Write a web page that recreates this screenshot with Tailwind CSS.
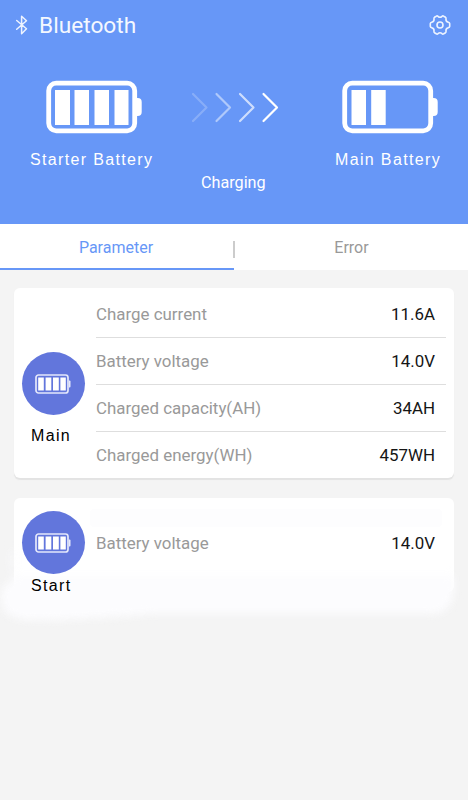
<!DOCTYPE html>
<html lang="en">
<head>
<meta charset="utf-8">
<title>Bluetooth</title>
<script src="https://cdn.jsdelivr.net/npm/@tailwindcss/browser@4"></script>
</head>
<body class="w-[468px] h-[800px] overflow-hidden bg-[#f4f4f4] font-['Roboto',sans-serif]">
<svg class="hidden">
  <symbol id="shell" viewBox="0 0 96 54">
    <rect x="2.7" y="3.2" width="86" height="47.600" rx="7.500" fill="none" stroke="#fff" stroke-width="4.800"/>
    <path d="M90.500 18h1.200a4 4 0 0 1 4 4v10a4 4 0 0 1-4 4h-1.200z" fill="#fff"/>
  </symbol>
  <symbol id="mini" viewBox="0 0 36 20">
    <rect x="1" y="1" width="32" height="18" rx="2.500" fill="none" stroke="#e4e8fb" stroke-width="1.700"/>
    <path d="M34 6.500h.500a1 1 0 0 1 1 1v5a1 1 0 0 1-1 1H34z" fill="#e4e8fb"/>
    <path d="M3.200 3.500h5.600v13H3.200zM10.600 3.500h5.700v13h-5.700zM18 3.500h5.800v13H18zM25.400 3.500h5.400v13h-5.400z" fill="#fff"/>
  </symbol>
</svg>

<header class="h-[224px] bg-[#6797f7] text-white">
  <div class="flex h-[50px] items-center pl-[15px] pr-[17px]">
    <svg class="w-[14px] h-[20px]" viewBox="0 0 14 20" fill="none" stroke="#edf3ff" stroke-width="1.500" stroke-linejoin="round" stroke-linecap="round"><path d="M1.700 5.500l9.800 8.300-4.900 4.900V1.200l4.900 4.500-9.800 8.500"/></svg>
    <h1 class="ml-[10px] mt-[2px] text-[22.700px] leading-[30px] text-[#f4f8ff]">Bluetooth</h1>
    <svg class="ml-auto w-[22px] h-[22px]" viewBox="0 0 22 22" fill="none" stroke="#edf3ff" stroke-width="1.600" stroke-linejoin="round"><path d="M7.300 2.200Q8.200 1.600 9 2.300Q11 4.200 13 2.300Q13.800 1.600 14.700 2.200L16.500 3.300Q17.300 3.900 17 4.900Q16.500 7.600 19.300 8.300Q20.600 8.600 20.700 9.600V12.400Q20.600 13.400 19.300 13.700Q16.500 14.400 17 17.100Q17.300 18.100 16.500 18.700L14.700 19.800Q13.800 20.400 13 19.700Q11 17.800 9 19.700Q8.200 20.400 7.300 19.800L5.500 18.700Q4.700 18.100 5 17.100Q5.500 14.400 2.700 13.700Q1.400 13.400 1.300 12.400V9.600Q1.400 8.600 2.700 8.300Q5.500 7.600 5 4.900Q4.700 3.900 5.500 3.300Z"/><circle cx="11" cy="11" r="3"/></svg>
  </div>
  <div class="grid h-[174px] grid-cols-[161px_144px_1fr] pl-[30px] pt-[30px]">
    <div>
      <svg class="ml-4 w-24 h-[54px]"><use href="#shell"/><path d="M9 10h15v35H9zM28.500 10h14.500v35H28.500zM48.500 10h14.500v35H48.500zM68.500 10h14v35h-14z" fill="#fff"/></svg>
      <p class="mt-[16px] whitespace-nowrap font-['Liberation_Sans',sans-serif] text-base leading-5 tracking-[1.350px]">Starter Battery</p>
    </div>
    <div>
      <svg class="mt-[11px] w-[90px] h-[32px]" viewBox="0 0 90 32" fill="none" stroke="#fff" stroke-width="2.200" stroke-linecap="round" stroke-linejoin="round"><path opacity=".22" d="M2 3l13.500 13.500L2 30"/><path opacity=".48" d="M25.500 3l13.500 13.500-13.500 13.500"/><path opacity=".68" d="M49 3l13.500 13.500-13.500 13.500"/><path d="M72.500 3l13.500 13.500L72.500 30"/></svg>
      <p class="ml-[10px] mt-[50px] text-[16.200px] leading-5">Charging</p>
    </div>
    <div>
      <svg class="ml-[7px] w-24 h-[54px]"><use href="#shell"/><path d="M9.500 10h14.500v35H9.500zM29.200 10h14.500v35H29.200z" fill="#fff"/></svg>
      <p class="mt-[16px] whitespace-nowrap font-['Liberation_Sans',sans-serif] text-base leading-5 tracking-[1.350px]">Main Battery</p>
    </div>
  </div>
</header>

<nav class="relative flex h-[46px] bg-white text-base leading-[48px]">
  <div class="w-[234px] border-b-2 border-[#6797f7] pr-[2px] text-center text-[#6797f7]">Parameter</div>
  <div class="flex-1 pl-[1px] text-center text-[#999]">Error</div>
  <span class="absolute left-[233px] top-[17px] h-[17px] w-[1.500px] bg-[#ccc]"></span>
</nav>

<main class="pt-[18px]">
  <section class="mx-[14px] flex h-[190px] w-[440px] rounded-md bg-white pl-2 pr-2 shadow-[0_2px_1px_#e3e3e3]">
    <div class="w-[74px] pt-[64px]">
      <div class="flex size-[63px] items-center justify-center rounded-full bg-[#6276dc]"><svg class="mr-px w-9 h-5"><use href="#mini"/></svg></div>
      <p class="ml-[9px] mt-[11px] font-['Liberation_Sans',sans-serif] text-base leading-5 tracking-[1.350px] text-black">Main</p>
    </div>
    <dl class="flex-1 pt-[3px] text-[16.900px] text-[#999]">
      <div class="flex h-[47px] items-center justify-between border-b-[1.500px] border-[#dedede] pr-[11px] pt-[2px]"><dt>Charge current</dt><dd class="text-[#151515]">11.6A</dd></div>
      <div class="flex h-[47px] items-center justify-between border-b-[1.500px] border-[#dedede] pr-[11px] pt-[2px]"><dt>Battery voltage</dt><dd class="text-[#151515]">14.0V</dd></div>
      <div class="flex h-[47px] items-center justify-between border-b-[1.500px] border-[#dedede] pr-[11px] pt-[2px]"><dt>Charged capacity(AH)</dt><dd class="text-[#151515]">34AH</dd></div>
      <div class="flex h-[46px] items-center justify-between pr-[11px] pt-[2px]"><dt>Charged energy(WH)</dt><dd class="text-[#151515]">457WH</dd></div>
    </dl>
  </section>

  <section class="relative mx-[14px] mt-[20px] flex h-[94px] w-[440px] rounded-md bg-white pl-2 pr-2">
    <svg class="absolute left-[-14px] top-[40px] h-[100px] w-[468px] overflow-visible blur-[4px]" viewBox="0 0 468 100"><path d="M14 8Q7 18 14 42Q1 46 1 58Q1 81 28 82Q70 83 150 76H430Q452 76 454 54V38H14z" fill="#fcfcfe"/></svg>
    <div class="absolute left-[76px] top-[11px] h-[18px] w-[352px] rounded bg-[#fdfdfe]"></div>
    <div class="relative w-[74px] pt-[13px]">
      <div class="flex size-[63px] items-center justify-center rounded-full bg-[#6276dc]"><svg class="mr-px w-9 h-5"><use href="#mini"/></svg></div>
      <p class="ml-[9px] mt-[2px] font-['Liberation_Sans',sans-serif] text-base leading-5 tracking-[1.350px] text-black">Start</p>
    </div>
    <dl class="relative flex-1 pt-[22px] text-[16.900px] text-[#999]">
      <div class="flex h-[47px] items-center justify-between pr-[11px]"><dt>Battery voltage</dt><dd class="text-[#151515]">14.0V</dd></div>
    </dl>
  </section>
</main>
</body>
</html>
